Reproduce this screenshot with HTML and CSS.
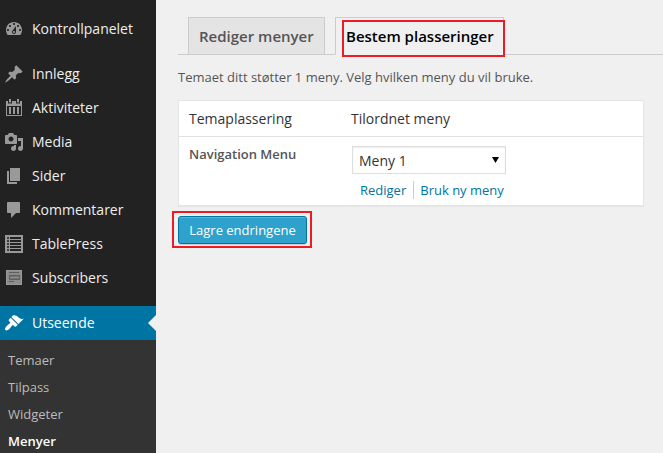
FILE: index.html
```html
<!DOCTYPE html>
<html lang="nb">
<head>
<meta charset="utf-8">
<title>Menyer</title>
<link rel="stylesheet" href="styles.css">
</head>
<body>
<div class="layout">
  <nav class="sidebar">
    <ul class="menu">
      <li class="item"><svg class="icon" viewBox="0 0 20 20"><path fill-rule="evenodd" d="M3.76 16h12.48c1.1-1.37 1.76-3.11 1.76-5 0-4.42-3.58-8-8-8s-8 3.58-8 8c0 1.89.66 3.63 1.76 5zM10 4c.55 0 1 .45 1 1s-.45 1-1 1-1-.45-1-1 .45-1 1-1zM6 6c.55 0 1 .45 1 1s-.45 1-1 1-1-.45-1-1 .45-1 1-1zm8 0c.55 0 1 .45 1 1s-.45 1-1 1-1-.45-1-1 .45-1 1-1zm-5.37 5.55L12 7v6c0 1.1-.9 2-2 2s-2-.9-2-2c0-.57.24-1.08.63-1.45zM4 10c.55 0 1 .45 1 1s-.45 1-1 1-1-.45-1-1 .45-1 1-1zm12 0c.55 0 1 .45 1 1s-.45 1-1 1-1-.45-1-1 .45-1 1-1zm-5 3c0-.55-.45-1-1-1s-1 .45-1 1 .45 1 1 1 1-.45 1-1z"/></svg><span>Kontrollpanelet</span></li>
      <li class="item spaced"><svg class="icon" viewBox="0 0 20 20"><path d="M10.44 3.02l1.82-1.82 6.36 6.35-1.83 1.82c-1.05-.68-2.48-.57-3.41.36l-.75.75c-.92.93-1.04 2.35-.35 3.41l-1.83 1.82-2.41-2.41-2.8 2.79c-.42.42-3.38 2.71-3.8 2.29s1.86-3.39 2.28-3.81l2.79-2.79L4.1 9.36l1.83-1.82c1.05.69 2.48.57 3.4-.36l.75-.75c.93-.92 1.05-2.35.36-3.41z"/></svg><span>Innlegg</span></li>
      <li class="item"><svg class="icon" viewBox="0 0 20 20"><path fill-rule="evenodd" d="M2 3h2v2.500h4V3h4v2.500h4V3h2v15H2zM3 8v9h14V8z"/><path d="M5 9h2v7H5zM9 9h2v7H9zM13 9h2v7h-2zM5 1h2v3.500H5zM13 1h2v3.500h-2z"/></svg><span>Aktiviteter</span></li>
      <li class="item"><svg class="icon" viewBox="0 0 20 20"><path fill-rule="evenodd" d="M13 11V4c0-.55-.45-1-1-1h-1.670L9 1H5L3.670 3H2c-.55 0-1 .45-1 1v7c0 .55.45 1 1 1h10c.55 0 1-.45 1-1zM7 4.500c1.380 0 2.500 1.120 2.500 2.500S8.380 9.500 7 9.500 4.500 8.380 4.500 7 5.620 4.500 7 4.500zM14 6h5v10.500c0 1.380-1.120 2.500-2.500 2.500S14 17.880 14 16.500s1.120-2.500 2.500-2.500c.17 0 .34.02.5.05V9h-3V6zm-4 8.050V13h2v3.500c0 1.380-1.120 2.500-2.500 2.500S7 17.880 7 16.500 8.120 14 9.500 14c.17 0 .34.02.5.05z"/></svg><span>Media</span></li>
      <li class="item"><svg class="icon" viewBox="0 0 20 20"><path d="M6 15V2h10v13H6zm-1 1h8v2H3V5h2v11z"/></svg><span>Sider</span></li>
      <li class="item"><svg class="icon" viewBox="0 0 20 20"><path d="M4 2h11c.55 0 1 .45 1 1v9c0 .55-.45 1-1 1h-3l-5 5v-5H4c-.55 0-1-.45-1-1V3c0-.55.45-1 1-1z"/></svg><span>Kommentarer</span></li>
      <li class="item"><svg class="icon" viewBox="0 0 20 20"><path fill-rule="evenodd" d="M1 1h18v18H1zM3 3v2h2V3zM6 3v2h11V3zM3 6v2h2V6zM6 6v2h11V6zM3 9v2h2V9zM6 9v2h11V9zM3 12v2h2v-2zM6 12v2h11v-2zM3 15v2h2v-2zM6 15v2h11v-2z"/><path d="M3.500 3.500h1v1h-1zM3.500 6.500h1v1h-1zM3.500 9.500h1v1h-1zM3.500 12.500h1v1h-1zM3.500 15.500h1v1h-1z"/></svg><span>TablePress</span></li>
      <li class="item"><svg class="icon" viewBox="0 0 20 20"><path d="M2 2h16v15H2z"/><path class="dim" d="M3 3h14v13H3z"/><path class="ink" fill-rule="evenodd" d="M5 4h10v1H5zM5 7h11v5H5zM6 8.500v2h9v-2zM5 13h5v1H5z"/></svg><span>Subscribers</span></li>
      <li class="item spaced current"><svg class="icon" viewBox="0 0 20 20"><path d="M14.480 11.060L7.410 3.990l1.500-1.500c.5-.56 2.300-.47 3.510.32 1.210.8 1.430 1.280 2.910 2.100 1.180.64 2.450 1.260 4.450.85zm-.71.71L6.700 4.700 4.930 6.470c-.39.39-.39 1.020 0 1.410l1.060 1.060c.39.39.39 1.030 0 1.420-.6.6-1.430 1.110-2.210 1.690-.35.26-.7.53-1.010.84C1.430 14.230.4 16.080 1.400 17.070c.99 1 2.840-.03 4.180-1.360.31-.31.58-.66.85-1.020.57-.78 1.080-1.610 1.690-2.210.39-.39 1.020-.39 1.410 0l1.060 1.060c.39.39 1.020.39 1.410 0z"/></svg><span>Utseende</span></li>
    </ul>
    <ul class="submenu">
      <li>Temaer</li>
      <li>Tilpass</li>
      <li>Widgeter</li>
      <li class="active">Menyer</li>
    </ul>
  </nav>
  <main class="content">
    <div class="tabs">
      <div class="tab">Rediger menyer</div>
      <div class="tab tab-active">Bestem plasseringer<span class="mark mark-tab"></span></div>
    </div>
    <p class="intro">Temaet ditt støtter 1 meny. Velg hvilken meny du vil bruke.</p>
    <div class="table">
      <div class="row head"><div>Temaplassering</div><div>Tilordnet meny</div></div>
      <div class="row body">
        <div class="name">Navigation Menu</div>
        <div class="assign">
          <div class="select"><span>Meny 1</span><svg class="arrow" viewBox="0 0 7 6"><path d="M0 0h7L3.500 6z"/></svg></div>
          <div class="links"><a>Rediger</a><a>Bruk ny meny</a></div>
        </div>
      </div>
    </div>
    <div class="save">
      <button class="button">Lagre endringene</button>
      <span class="mark mark-save"></span>
    </div>
  </main>
</div>
</body>
</html>
```
FILE: styles.css
```css
* { box-sizing: border-box; }
body {
  margin: 0;
  background: #f0f0f0;
  color: #444;
  font: 13px/20px "Open Sans", sans-serif;
}
ul { list-style: none; margin: 0; padding: 0; }
.layout { display: flex; width: 663px; height: 453px; overflow: hidden; }
.sidebar {
  flex: none;
  display: flex;
  flex-direction: column;
  width: 156px;
  background: #222;
}
.menu { padding-top: 12px; }
.item {
  position: relative;
  display: flex;
  align-items: center;
  gap: 8px;
  height: 34px;
  padding-left: 4px;
  color: #eee;
  font-size: 14px;
}
.spaced { margin-top: 11px; }
.icon { width: 20px; height: 20px; fill: #999; }
.icon .dim { fill: #8c8c8c; }
.icon .ink { fill: #5e5e5e; }
.current { background: #0074a2; color: #fff; }
.current .icon { fill: #fff; }
.current::after {
  content: "";
  position: absolute;
  right: 0;
  top: 9px;
  border: 8px solid transparent;
  border-left: 0;
  border-right-color: #f0f0f0;
}
.submenu { flex: 1; padding: 7px 8px 0; background: #333; color: #bbb; }
.submenu li { height: 27px; line-height: 27px; }
.submenu .active { color: #fff; font-weight: 600; }

.content { flex: 1; padding: 17px 0 0 22px; }
.tabs {
  display: flex;
  gap: 10px;
  height: 38px;
  padding-left: 10px;
  border-bottom: 1px solid #ccc;
}
.tab {
  width: 137px;
  height: 38px;
  padding: 7px 10px;
  border: 1px solid #ccc;
  background: #e4e4e4;
  color: #555;
  font-size: 15px;
  font-weight: 600;
  line-height: 22px;
  white-space: nowrap;
}
.tab-active {
  position: relative;
  width: 169px;
  border-bottom-color: #f0f0f0;
  background: #f0f0f0;
  color: #000;
}
.mark { position: absolute; border: 2px solid #ed1c24; pointer-events: none; }
.mark-tab { left: 6px; top: 2px; width: 163px; height: 37px; }
.intro { margin: 12px 0 13px; color: #555; }
.table {
  width: 466px;
  height: 106px;
  border: 1px solid #e5e5e5;
  background: #fff;
  box-shadow: 0 1px 1px rgba(0, 0, 0, .04);
}
.row { display: grid; grid-template-columns: 162px 1fr; padding-left: 10px; }
.head {
  height: 36px;
  border-bottom: 1px solid #e1e1e1;
  color: #333;
  font-size: 14px;
  line-height: 35px;
}
.name { padding-top: 7px; color: #555; font-weight: 600; }
.assign { padding: 9px 0 0 1px; }
.select {
  display: flex;
  align-items: center;
  justify-content: space-between;
  width: 154px;
  height: 28px;
  padding: 0 6px;
  border: 1px solid #ddd;
  box-shadow: inset 0 1px 2px rgba(0, 0, 0, .07);
  color: #333;
  font-size: 14px;
}
.select span { padding-top: 2px; }
.arrow { width: 7px; height: 6px; fill: #000; }
.links { display: flex; padding: 7px 0 0 8px; color: #0074a2; line-height: 18px; }
.links a + a { margin-left: 7px; padding-left: 6px; border-left: 1px solid #ccc; }
.save { position: relative; margin-top: 10px; }
.button {
  display: block;
  width: 129px;
  height: 28px;
  padding: 0;
  border: 1px solid #0074a2;
  border-radius: 3px;
  background: #2ea2cc;
  box-shadow: inset 0 1px 0 rgba(120, 200, 230, .5), 0 1px 0 rgba(0, 0, 0, .15);
  color: #fff;
  font: 13px/26px "Open Sans", sans-serif;
}
.mark-save { left: -6px; top: -5px; width: 140px; height: 37px; }
```
